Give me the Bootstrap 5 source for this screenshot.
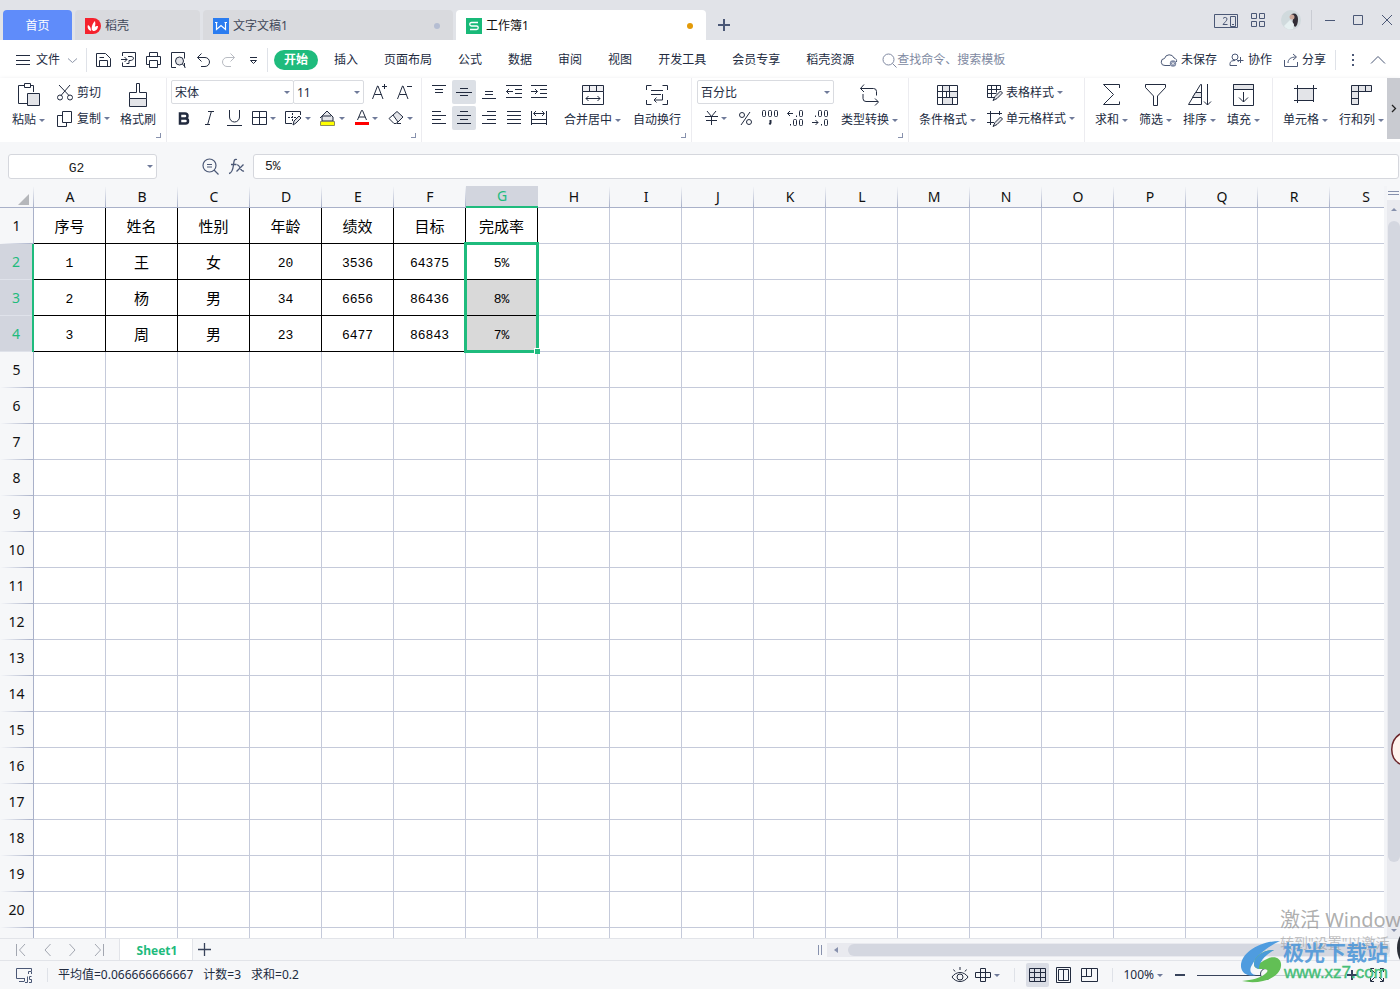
<!DOCTYPE html>
<html lang="zh-CN">
<head>
<meta charset="utf-8">
<meta name="viewport" content="width=device-width, initial-scale=1">
<title>工作簿1</title>
<link rel="stylesheet" href="https://cdn.jsdelivr.net/npm/bootstrap@5.3.0/dist/css/bootstrap.min.css">
<style>
:root{--ink:#222b3f;--green:#1fbb7d;--line:#c5cada;--headline:#a9b1c9;--pane:#f6f7f9;--soft:#dfe2e8}
body{font:12px/18px "Noto Sans","Noto Sans CJK SC",sans-serif;color:var(--ink);background:#fff}
button{border:0;background:none;padding:0;color:inherit;font:inherit;white-space:nowrap}
svg{flex:none;display:block;overflow:visible}
.ic{fill:none;stroke:var(--ink);stroke-width:1}
.ic .f{fill:#e3e4e8}
.titlebar{height:40px;background:#e1e3e8;padding-left:3px}
.docs{gap:3px}
.doc{height:30px;background:#d9dade;border-radius:4px 4px 0 0;color:#3f4759;padding:2px 13px 0 10px;min-width:0}
.doc.home{width:69px;background:#5f8cfa;color:#fff;justify-content:center;padding:2px 0 0}
.doc.now{background:#fff;color:#111}
.w125{width:125px}.w250{width:250px}
.dot{width:6px;height:6px;border-radius:50%;background:#b5bdd2}
.now .dot{background:#e39a08}
.vr1{width:1px;background:var(--soft);flex:none}
.menubar{height:38px;padding-top:2px}
.quick{width:25px;display:flex;justify-content:center}
.mtab{padding:1px 10px;border-radius:10px}
.mtab.on{background:var(--green);color:#fff;font-weight:700}
.dd::after{content:"";flex:none;border:3px solid transparent;border-top-color:#6f7a99;border-bottom:0;margin-left:3px}
.dd{display:inline-flex;align-items:center}
.ribbon{height:64px;box-shadow:0 2px 5px #d5d7dc}
.grp{border-right:1px solid #ececf0;flex:none;height:64px;display:flex;flex-direction:column;padding-top:1px}
.corner{align-self:flex-end;width:5px;height:5px;border:solid #8791ad;border-width:0 1px 1px 0;margin:2px 5px 0 0}
.line26{height:26px;display:flex;align-items:center}
button.line26{padding-top:1px}
.big{height:52px;display:flex;flex-direction:column;align-items:center;padding-top:4px;gap:4px}
.tool{height:24px;display:flex;align-items:center;justify-content:center}
.w24{width:24px;margin-right:1px}.w25{width:25px}.w34{width:34px}
.tool.on{background:#dce0e6;border-radius:2px}
select.pick{appearance:none;height:24px;border:1px solid #d9dbe0;border-radius:2px;background:#fff url("data:image/svg+xml,%3Csvg xmlns='http://www.w3.org/2000/svg' width='6' height='3'%3E%3Cpath d='M0 0h6L3 3z' fill='%236f7a99'/%3E%3C/svg%3E") no-repeat right 3px center;padding:1px 3px 0;color:inherit;font:inherit}
.more{background:#c9cbd1;width:13px;height:61px}
.fbar{height:44px;background:var(--pane);padding:12px 1px 0 8px}
.fbar input{height:25px;border:1px solid #d5d7dd;border-radius:3px;font:13px "Liberation Mono",monospace;color:#222;min-width:0}
.namebox{width:149px;border:1px solid #d5d7dd;border-radius:3px;background:#fff;height:25px;padding-right:3px}
.fbar .namebox input{border:0;height:23px;width:100%;text-align:center;padding:3px 0 0;background:none}
.sheet{table-layout:fixed;border-collapse:separate;border-spacing:0;width:1402px;font-size:14px;color:#111}
.sheet th,.sheet td{padding:0;text-align:center;vertical-align:middle;font-weight:400;height:36px;line-height:20px}
.sheet td{border:solid var(--line);border-width:0 1px 1px 0}
.sheet thead th{height:22px;border-bottom:1px solid var(--headline);background:linear-gradient(var(--pane),var(--headline)) right/1px 100% no-repeat var(--pane)}
.sheet tbody th{border-right:1px solid var(--headline);background:linear-gradient(90deg,var(--pane),var(--headline)) bottom/100% 1px no-repeat var(--pane)}
.sheet thead th:first-child{width:34px}
.sheet thead th.sel{background:#d2d5de;color:var(--green);border-bottom:2px solid var(--green)}
.sheet tbody th.sel{background:linear-gradient(#dfe2ea,#dfe2ea) bottom/100% 1px no-repeat #d2d5de;color:var(--green);border-right:2px solid var(--green)}
.sheet td.data{border-color:#000;color:#000;font:15px/20px "Noto Sans CJK SC",sans-serif;padding-top:1px}
.sheet td.num{font:13px/20px "Liberation Mono",monospace;padding-top:4px}
.sheet td.shade{background:#d9d9d9}
.range{position:absolute;left:-2px;top:-2px;width:75px;height:111px;border:3px solid var(--green);pointer-events:none;z-index:2}
.range::after{content:"";position:absolute;right:-4px;bottom:-4px;width:6px;height:6px;background:var(--green);border:solid #fff;border-width:1px 0 0 1px}
.vscroll{width:16px;background:#e9eaef;border-left:3px solid #f3f4f7}
.vthumb{width:12px;flex:1;border-radius:6px;background:#d4d7e0;margin:7px 0 76px}
.tabsbar{height:23px;background:var(--pane);border:solid #e2e4e9;border-width:1px 0}
.pager{width:119px;gap:18px}
.sheettab{width:74px;background:#fff;color:var(--green);font-weight:700;border:solid #e2e4e9;border-width:0 1px;text-align:center;padding:2px 0 0 2px}
.hscroll{width:563px;background:#e9eaef;height:14px}
.hthumb{height:12px;border-radius:6px;background:#d4d7e0}
.status{height:28px;background:var(--pane)}
.stats{gap:10px}
.view{width:23px;height:24px;display:flex;align-items:center;justify-content:center;border-radius:2px}
.view.on{background:#dadde5}
.zoomer{appearance:none;width:148px;height:14px;background:linear-gradient(90deg,#38435b 50%,#c9ccd4 50%) center/100% 1px no-repeat}
.zoomer::-webkit-slider-runnable-track{background:none;height:14px;display:flex;align-items:center}
.zoomer::-webkit-slider-thumb{appearance:none;width:12px;height:12px;margin:0;border:1px solid #38435b;border-radius:50%;background:var(--pane)}
.overlay{right:0;bottom:0;width:160px;height:84px;overflow:hidden;pointer-events:none;z-index:5}
.act{left:40px;top:0;font-size:20px;line-height:30px;color:#999c;white-space:nowrap}
.act2{left:40px;top:28px;font-size:14px;line-height:20px;color:#9999;white-space:nowrap}
.brand{left:43px;top:32px;font:700 21px/28px "Noto Sans CJK SC",sans-serif;color:#4c96d8e0;white-space:nowrap}
.site{left:44px;top:58px;font:17px/20px "Liberation Sans",sans-serif;color:#45be78;-webkit-text-stroke:0.4px #45be78}
.bubble{right:0;top:732px;z-index:5}
.edge{right:0;top:930px;z-index:6}
</style>
</head>
<body class="vh-100 overflow-hidden d-flex flex-column position-relative">

<header class="titlebar d-flex align-items-end flex-shrink-0">
  <div class="docs d-flex align-items-end">
    <button class="doc home d-flex align-items-center">首页</button>
    <button class="doc w125 d-flex align-items-center gap-1">
      <svg width="16" height="16" viewBox="0 0 16 16"><path d="M0 0h8a8 8 0 0 1 0 16H0z" fill="#f5222d"/><path d="M7 13C6 8 8 5 10 3c1 4 0 7-3 10M6 13C3 12 2 9 3 7c2 1 3 3 3 6M8 13c0-3 2-5 5-5 0 3-2 5-5 5" fill="#fff"/></svg>稻壳</button>
    <button class="doc w250 d-flex align-items-center gap-1">
      <svg width="16" height="16" viewBox="0 0 16 16"><path d="M0 0h16v16H0z" fill="#2a7cf0"/><path d="M3.500 4v7.500L8 7.500l4.500 4V4M2 4.500h2.500M11.500 4.500H14" fill="none" stroke="#fff" stroke-width="1.200"/></svg>文字文稿1<span class="dot ms-auto"></span></button>
    <button class="doc now w250 d-flex align-items-center gap-1">
      <svg width="16" height="16" viewBox="0 0 16 16"><path d="M0 0h16v16H0z" fill="#18b978"/><path d="M12 4.500H5.500a1.500 1.500 0 0 0 0 3.500h5a1.700 1.700 0 0 1 0 3.500H4" fill="none" stroke="#fff" stroke-width="1.300"/></svg>工作簿1<span class="dot ms-auto"></span></button>
  </div>
  <button class="ms-2 px-1 pb-2" aria-label="新建"><svg width="12" height="14" viewBox="0 0 12 14" fill="none" stroke="#4b5876" stroke-width="2"><path d="M6 1v12M0 7h12"/></svg></button>
  <div class="ms-auto d-flex align-items-center h-100" style="padding-right:8px">
    <button aria-label="窗口"><svg width="24" height="15" viewBox="0 0 24 15" fill="none" stroke="#4b5876"><path d="M.5 1.500h23v13H.5zM16.500 3.500h5v10h-5zM18 11.500h2M9 5.500c1-1.500 4-1.500 4 .5 0 1.500-2 3-4 5.500h4.500"/></svg></button>
    <button style="margin-left:13px" aria-label="应用"><svg width="14" height="14" viewBox="0 0 14 14" fill="none" stroke="#4b5876"><path d="M.5.5h5v5h-5zM8.500.5h5v5h-5zM.5 8.500h5v5h-5zM8.500 8.500h5v5h-5z"/></svg></button>
    <button class="ms-3" aria-label="账户"><svg width="20" height="20" viewBox="0 0 20 20"><circle cx="10" cy="10" r="10" fill="#d0dadd"/><path d="M10 5c3-3 7-1 7 4 0 4-1 7-3 8-2-2-3-5-2-8z" fill="#312e36"/><circle cx="11" cy="7" r="2.500" fill="#cba99b"/><path d="M3 16l6-6 4 4-1 5c-4 1-7 0-9-3" fill="#e6f0f1"/></svg></button>
    <span class="vr1" style="height:20px;margin-left:10px;background:#c9ccd3"></span>
    <button style="margin-left:13px" aria-label="最小化"><svg width="10" height="10" stroke="#4b5876"><path d="M0 5.500h10"/></svg></button>
    <button style="margin-left:18px" aria-label="最大化"><svg width="10" height="10" fill="none" stroke="#4b5876"><path d="M.5.5h9v9h-9z"/></svg></button>
    <button style="margin-left:19px" aria-label="关闭"><svg width="10" height="10" stroke="#4b5876"><path d="M0 0l10 10M10 0L0 10"/></svg></button>
  </div>
</header>

<nav class="menubar d-flex align-items-center flex-shrink-0 ps-3">
  <button class="d-flex align-items-center"><svg class="ic" width="14" height="10"><path d="M0 .5h14M0 5.500h14M0 9.500h14"/></svg><span style="margin-left:6px">文件</span>
    <svg class="ms-2" width="9" height="5" fill="none" stroke="#8d95a8"><path d="M0 .5l4.500 4L9 .5"/></svg></button>
  <span class="vr1" style="height:24px;margin-left:9px;margin-right:4px"></span>
  <button class="quick" aria-label="保存"><svg class="ic" width="15" height="16"><path d="M.5 1.500h9l5 5v8H.5zM3.500 14.500v-6h8v6M3.500 5.500H8"/></svg></button>
  <button class="quick" aria-label="输出"><svg class="ic" width="15" height="16"><path d="M1.500 4V.5h13v14h-13v-4M0 7.500h6M3.500 5L6 7.500 3.500 10M8 11.500V8.500h1c4.500 0 4.500-4 1-4H7M8 11.500H5.500"/></svg></button>
  <button class="quick" aria-label="打印"><svg class="ic" width="15" height="16"><path d="M3.500 4V.5h8V4M3 12.500H.5v-8h14v8H12M3.500 8.500h8v7h-8z"/></svg></button>
  <button class="quick" aria-label="预览"><svg class="ic" width="15" height="16"><path d="M5 15.500H.5V.5h13v6M13.500 11v4.500"/><circle class="f" cx="8.500" cy="9" r="4"/><path d="M11.500 12l3 3.500"/></svg></button>
  <button class="quick" aria-label="撤销"><svg class="ic" width="13" height="14"><path d="M4.500.5l-4 4 4 4M.5 4.500H8a4.500 4.500 0 0 1 0 9H4"/></svg></button>
  <button class="quick" aria-label="恢复"><svg class="ic" width="13" height="14" style="stroke:#b8bbc2"><path d="M8.500.5l4 4-4 4M12.500 4.500H5a4.500 4.500 0 0 0 0 9h4"/></svg></button>
  <button class="quick" aria-label="更多"><svg class="ic" width="7" height="8"><path d="M0 1.500h7M.5 4.500l3 3 3-3z"/></svg></button>
  <span class="vr1" style="height:24px;margin:0 6px 0 1px"></span>
  <div class="d-flex" style="gap:6px">
    <button class="mtab on">开始</button><button class="mtab">插入</button><button class="mtab">页面布局</button><button class="mtab">公式</button><button class="mtab">数据</button><button class="mtab">审阅</button><button class="mtab">视图</button><button class="mtab">开发工具</button><button class="mtab">会员专享</button><button class="mtab">稻壳资源</button>
  </div>
  <button class="d-flex align-items-center" style="margin-left:18px;color:#8089a1"><svg width="15" height="15" fill="none" stroke="#8089a1"><circle cx="6.500" cy="6.500" r="5.500"/><path d="M10.500 10.500l4 4"/></svg><span>查找命令、搜索模板</span></button>
  <div class="ms-auto d-flex align-items-center" style="gap:12px;padding-right:15px">
    <button class="d-flex align-items-center gap-1"><svg class="ic" width="16" height="14" style="stroke:#4b5876"><path d="M9 12.500H4a3.500 3.500 0 0 1-.5-7 5 5 0 0 1 9.500-.5c2 .5 3 2 2.500 4"/><circle cx="12" cy="10.500" r="3.200" fill="#7f8aa5" stroke="none"/><path d="M10.800 9.300l2.400 2.400M13.200 9.300l-2.400 2.400" stroke="#fff"/></svg>未保存</button>
    <button class="d-flex align-items-center gap-1"><svg class="ic" width="15" height="14" style="stroke:#4b5876"><circle cx="6" cy="4" r="3"/><path d="M8 12.500H1v-2c0-2 2-3 5-3M8 7.500l2 1M11.500 4v6M8.500 7.500h6"/></svg>协作</button>
    <button class="d-flex align-items-center gap-1"><svg class="ic" width="14" height="14" style="stroke:#4b5876"><path d="M.5 7v6.500h13V9M4 10c0-4 3-6 8-6M9 1l3.500 3L9 7"/></svg>分享</button>
    <span class="vr1" style="height:20px;margin-left:-3px"></span>
    <button class="px-1" style="margin-right:1px" aria-label="选项"><svg width="2" height="12" fill="#4b5876"><path d="M0 0h2v2H0zM0 5h2v2H0zM0 10h2v2H0z"/></svg></button>
    <button aria-label="收起"><svg width="14" height="8" fill="none" stroke="#4b5876"><path d="M0 7.500l7-7 7 7"/></svg></button>
  </div>
</nav>

<section class="ribbon d-flex flex-shrink-0">
  <div class="grp" style="width:167px">
    <div class="d-flex" style="padding-left:12px">
      <button class="big"><svg class="ic" width="22" height="24"><path d="M7 2.500H.5v18H9M15.500 9V2.500H13M6.500.5h6v4h-6z"/><path class="f" d="M9.500 10.500h12v12h-12z"/></svg><span class="dd">粘贴</span></button>
      <div style="margin-left:12px;width:54px">
        <button class="line26" style="gap:4px"><svg class="ic" width="16" height="16"><circle cx="3" cy="12.500" r="2.500"/><circle cx="13" cy="12.500" r="2.500"/><path d="M4 10.500L13 0M12 10.500L2 0"/></svg>剪切</button>
        <button class="line26" style="gap:4px"><svg class="ic" width="16" height="16"><path d="M5.500.5h9v11h-9zM5.500 4.500H.5v11h9v-4"/></svg><span class="dd">复制</span></button>
      </div>
      <button class="big" style="margin-left:9px"><svg class="ic" width="18" height="24"><path d="M7.500 9.500v-9h3v9h7v6H.5v-6z"/><path class="f" d="M.5 15.500h17v8H.5z"/></svg>格式刷</button>
    </div><span class="corner"></span>
  </div>

  <div class="grp" style="width:255px">
    <div class="line26" style="padding-left:4px">
      <select class="pick" style="width:123px" aria-label="字体"><option>宋体</option></select>
      <select class="pick" style="width:71px;margin-left:-1px" aria-label="字号"><option>11</option></select>
      <button class="tool w25" style="margin-left:3px" aria-label="增大字号"><svg class="ic" width="15" height="16"><path d="M.5 15L5.500 2H6l5 13M2.500 10.500h7M12.500 0v5M10 2.500h5"/></svg></button>
      <button class="tool w25" aria-label="减小字号"><svg class="ic" width="15" height="16"><path d="M.5 15L5.500 2H6l5 13M2.500 10.500h7M10 2.500h5"/></svg></button>
    </div>
    <div class="line26" style="padding-left:5px">
      <button class="tool w25" aria-label="加粗"><svg class="ic" width="13" height="13" style="stroke-width:2.500"><path d="M2 1.500h5a2.300 2.300 0 0 1 0 5H2zM2 6.500h5.500a2.500 2.500 0 0 1 0 5H2z"/></svg></button>
      <button class="tool w25" aria-label="倾斜"><svg class="ic" width="9" height="14"><path d="M3 .5h6M0 13.500h5M6.500 0l-4 14"/></svg></button>
      <button class="tool w25" aria-label="下划线"><svg class="ic" width="15" height="16"><path d="M2.500 0v7a5 5 0 0 0 10 0V0M0 15.500h15"/></svg></button>
      <button class="tool w34 dd" aria-label="边框"><svg class="ic" width="15" height="16"><path d="M.5 1.500h14v13H.5zM7.500 1v14M0 7.500h15"/></svg></button>
      <button class="tool w34 dd" aria-label="绘制边框"><svg class="ic" width="17" height="16"><path d="M15.500 5V1.500H.5v12H7"/><path d="M7.500 3v9M3 7.500h9" stroke-dasharray="2 1"/><path class="f" d="M8 15l1-4 5-5 2 2-5 5z"/></svg></button>
      <button class="tool w34 dd" aria-label="填充颜色"><svg class="ic" width="17" height="16"><path class="f" d="M3 6l5-5 6 6v4H3z"/><path d="M1 8l2-2h9"/><path d="M1.500 11.500h14v4h-14z" style="fill:#ff0;stroke:#8d8e55"/></svg></button>
      <button class="tool w34 dd" aria-label="字体颜色"><svg class="ic" width="14" height="16"><path d="M2.500 10L6.500.5h1L11.500 10M4 7h6"/><path d="M0 12h14v3H0z" style="fill:red;stroke:none"/></svg></button>
      <button class="tool w34 dd" aria-label="清除"><svg class="ic" width="16" height="14"><path class="f" d="M5 4l4-3.500 6 5.500-5 5z"/><path d="M5 4L1 7.500l5 5h2l2-1.500M9 12.500h4"/></svg></button>
    </div><span class="corner"></span>
  </div>

  <div class="grp" style="width:270px">
    <div class="d-flex" style="padding-left:5px">
      <div>
        <div class="line26">
          <button class="tool w24" aria-label="顶端对齐"><svg class="ic" width="14" height="14"><path d="M0 .5h14M3 4.500h8M3 7.500h8"/></svg></button>
          <button class="tool w24 on" aria-label="垂直居中"><svg class="ic" width="16" height="14"><path d="M4 3.500h8M0 7.500h16M4 10.500h8"/></svg></button>
          <button class="tool w24" aria-label="底端对齐"><svg class="ic" width="14" height="14"><path d="M3 6.500h8M3 9.500h8M0 13.500h14"/></svg></button>
          <button class="tool w24" aria-label="减少缩进"><svg class="ic" width="16" height="14"><path d="M0 .5h16M9 4.500h7M9 8.500h7M0 12.500h16M7 6.500H.5M3 4L.5 6.500 3 9"/></svg></button>
          <button class="tool w24" aria-label="增加缩进"><svg class="ic" width="16" height="14"><path d="M0 .5h16M9 4.500h7M9 8.500h7M0 12.500h16M0 6.500h6.500M4 4l2.500 2.500L4 9"/></svg></button>
        </div>
        <div class="line26">
          <button class="tool w24" aria-label="左对齐"><svg class="ic" width="14" height="14"><path d="M0 .5h9M0 4.500h14M0 8.500h9M0 12.500h14"/></svg></button>
          <button class="tool w24 on" aria-label="水平居中"><svg class="ic" width="14" height="14"><path d="M3 .5h8M0 4.500h14M3 8.500h8M0 12.500h14"/></svg></button>
          <button class="tool w24" aria-label="右对齐"><svg class="ic" width="14" height="14"><path d="M5 .5h9M0 4.500h14M5 8.500h9M0 12.500h14"/></svg></button>
          <button class="tool w24" aria-label="两端对齐"><svg class="ic" width="14" height="14"><path d="M0 .5h14M0 4.500h14M0 8.500h14M0 12.500h14"/></svg></button>
          <button class="tool w24" aria-label="分散对齐"><svg class="ic" width="16" height="14"><path d="M.5 0v14M15.500 0v14M3 2.500h10M5 0L2.500 2.500 5 5M11 0l2.500 2.500L11 5M1 8.500h14M1 12.500h14"/></svg></button>
        </div>
      </div>
      <button class="big" style="margin-left:12px"><svg class="ic" width="22" height="20" style="margin:2px 0"><path class="f" d="M.5.500h21v6H.5z" style="fill:#f0f0f3"/><path d="M.5 6.500v13h21v-13M7.500.5v6M14.500.5v6M4 13.500h14M6.500 11L4 13.500 6.500 16M15.500 11l2.500 2.500-2.500 2.500"/></svg><span class="dd">合并居中</span></button>
      <button class="big" style="margin-left:12px"><svg class="ic" width="22" height="20" style="margin:2px 0"><path d="M.5 5V.5h5M16.500.5h5V5M.5 15v4.500h5M16.500 19.500h5V15M5 5.500h12M5 9.500h10M16.500 9v6H8M10.500 12.500L8 15l2.500 2.500"/></svg>自动换行</button>
    </div><span class="corner"></span>
  </div>

  <div class="grp" style="width:217px">
    <div class="d-flex" style="padding-left:5px">
      <div>
        <div class="line26"><select class="pick" style="width:137px" aria-label="数字格式"><option>百分比</option></select></div>
        <div class="line26" style="padding-left:2px">
          <button class="tool w34 dd" aria-label="货币"><svg class="ic" width="13" height="14"><path d="M2 0l4.500 5.500L11 0M0 5.500h13M1 9.500h11M6.500 5.500V14"/></svg></button>
          <button class="tool w25" aria-label="百分比"><svg class="ic" width="13" height="13"><circle cx="3" cy="3" r="2.500"/><circle cx="10" cy="10" r="2.500"/><path d="M11 0L2 13"/></svg></button>
          <button class="tool w25" aria-label="千位分隔"><svg class="ic" width="17" height="16"><rect x=".5" y=".5" width="3" height="6" rx="1"/><rect x="6.500" y=".5" width="3" height="6" rx="1"/><rect x="12.500" y=".5" width="3" height="6" rx="1"/><path d="M8.500 10v3l-1 1.500" stroke-width="2"/></svg></button>
          <button class="tool w25" aria-label="增加小数位"><svg class="ic" width="17" height="16"><path d="M6 3.500H.5M3 1L.5 3.500 3 6M9.500 5.500V7M3.500 14v1.500"/><rect x="12.500" y=".5" width="3" height="6" rx="1"/><rect x="6.500" y="9.500" width="3" height="6" rx="1"/><rect x="12.500" y="9.500" width="3" height="6" rx="1"/></svg></button>
          <button class="tool w25" aria-label="减少小数位"><svg class="ic" width="17" height="16"><path d="M0 12.500h6M3.500 10L6 12.500 3.500 15M9.500 14v1.500M3.500 5.500V7"/><rect x="6.500" y=".5" width="3" height="6" rx="1"/><rect x="12.500" y=".5" width="3" height="6" rx="1"/><rect x="12.500" y="9.500" width="3" height="6" rx="1"/></svg></button>
        </div>
      </div>
      <button class="big" style="margin-left:7px"><svg class="ic" width="19" height="22" style="margin:1px 0"><path d="M4 .5l-3.500 4L4 8M.5 4.500h13a3 3 0 0 1 3 3v4M15 14.500l3.500 3.500-3.500 3.500M18 17.500H6a3 3 0 0 1-3-3V10"/></svg><span class="dd">类型转换</span></button>
    </div><span class="corner"></span>
  </div>

  <div class="grp" style="width:176px">
    <div class="d-flex" style="padding-left:10px">
      <button class="big"><svg class="ic" width="21" height="20" style="margin:2px 0"><path d="M.5.5h20v19H.5z"/><path class="f" d="M5.500.5h7v6h-7zM12.500 6.500h8v6h-8zM5.500 12.500h10v7h-10z"/><path d="M.5 6.500h20M.5 12.500h20M5.500.5v19M12.500 0v6M9.500 6.500v6M15.500 12.500v7"/></svg><span class="dd">条件格式</span></button>
      <div style="margin-left:11px">
        <button class="line26" style="gap:3px"><svg class="ic" width="16" height="16"><path d="M7 12.500H.5V.5h13V5M.5 4.500h13M.5 8.500h9M4.500.5v12M9.500.5v7"/><path class="f" d="M6 15.500l2-4 5.500-5.500 2 2L10 13.500z"/></svg><span class="dd">表格样式</span></button>
        <button class="line26" style="gap:3px"><svg class="ic" width="16" height="16"><path d="M3.500 0v14M0 2.500h15M0 11.500h7M12.500 0v4"/><path class="f" d="M6 15.500l2-4 5.500-5.500 2 2L10 13.500z"/></svg><span class="dd">单元格样式</span></button>
      </div>
    </div>
  </div>

  <div class="grp" style="width:188px">
    <div class="d-flex" style="padding-left:10px;gap:11px">
      <button class="big"><svg class="ic" width="17" height="22" style="margin:1px 0"><path d="M16.500 4V.5H.5l10 10-10 10h16v-3"/></svg><span class="dd">求和</span></button>
      <button class="big"><svg class="ic" width="21" height="22" style="margin:1px 0"><path d="M.5.5h20v3L12.500 12v9.500h-4V12l-8-8.500z"/></svg><span class="dd">筛选</span></button>
      <button class="big"><svg class="ic" width="23" height="22" style="margin:1px 0"><path d="M.5 20.500L12.500.5h1v20z"/><path class="f" d="M4.500 13.500h9v-5h-6z"/><path d="M19.500 0v21M16 17.500l3.500 3.500 3.500-3.500"/></svg><span class="dd">排序</span></button>
      <button class="big"><svg class="ic" width="21" height="22" style="margin:1px 0"><path d="M.5.500h20v21H.5z"/><path class="f" d="M.5.5h20v5H.5z"/><path d="M10.500 8v10M6 13.500l4.500 4.500 4.500-4.500"/></svg><span class="dd">填充</span></button>
    </div>
  </div>

  <div class="grp border-0" style="width:114px">
    <div class="d-flex" style="padding-left:10px;gap:11px">
      <button class="big"><svg class="ic" width="23" height="20" style="margin:2px 0"><path class="f" d="M3.500 3.500h16v12h-16z"/><path d="M3.500 0v18M19.500 0v13M0 3.500h23M0 15.500h17M19.500 15v2"/></svg><span class="dd">单元格</span></button>
      <button class="big"><svg class="ic" width="21" height="20" style="margin:2px 0"><path class="f" d="M.5.5h20v6h-13v13h-7z"/><path d="M7.500.5v6M14.500.5v6M.5 6.500h7M.5 13.500h7"/></svg><span class="dd">行和列</span></button>
    </div>
  </div>
  <button class="more ms-auto d-flex align-items-center justify-content-center" aria-label="向右滚动"><svg width="4" height="7" fill="none" stroke="#222" stroke-width="1.300"><path d="M0 0l3.500 3.500L0 7"/></svg></button>
</section>

<section class="fbar d-flex flex-shrink-0">
  <div class="namebox dd"><input value="G2" aria-label="名称框"></div>
  <button class="tool" style="margin-left:45px" aria-label="查找"><svg width="17" height="17" fill="none" stroke="#4b5876" stroke-width="1.200"><circle cx="7.500" cy="7.500" r="6.500"/><path d="M12 12l4.500 4.500M5 6.500h5M5 9h5"/></svg></button>
  <button class="tool" style="margin:0 8px 0 10px" aria-label="插入函数"><svg width="16" height="17" fill="none" stroke="#4b5876" stroke-width="1.300"><path d="M8 1.500C5 .5 5 3 4.500 7S3 15 0 15.500M2 6.500h5.500M8 7c3-1 3 7 7 6M14.500 6.500L7.500 13.500"/></svg></button>
  <input class="flex-grow-1" value="5%" aria-label="编辑栏" style="padding:0 11px">
</section>

<main class="d-flex flex-grow-1 overflow-hidden" style="min-height:0">
  <div class="flex-grow-1 overflow-hidden" style="min-width:0">
    <table class="sheet" id="sheet"><thead></thead><tbody></tbody></table>
  </div>
  <div class="vscroll d-flex flex-column flex-shrink-0 align-items-center">
    <svg width="13" height="28"><path d="M0 0h13v14H0z" fill="#f6f7f9"/><path d="M1 5.500h11M1 8.500h11" stroke="#8791ad"/><path d="M4 25l3-3 3 3z" fill="#8791ad"/></svg>
    <div class="vthumb"></div>
    <svg width="6" height="13" style="margin-top:-13px"><path d="M0 4h6L3 7z" fill="#8791ad"/></svg>
  </div>
</main>

<section class="tabsbar d-flex flex-shrink-0">
  <div class="pager d-flex align-items-center ps-3">
    <button aria-label="第一张"><svg width="10" height="12" fill="none" stroke="#a3a7b1"><path d="M.5 0v12M9 0L3.500 6 9 12"/></svg></button>
    <button aria-label="上一张"><svg width="7" height="12" fill="none" stroke="#a3a7b1"><path d="M6.500 0L1 6l5.500 6"/></svg></button>
    <button aria-label="下一张"><svg width="7" height="12" fill="none" stroke="#a3a7b1"><path d="M.5 0L6 6 .5 12"/></svg></button>
    <button aria-label="最后一张"><svg width="10" height="12" fill="none" stroke="#a3a7b1"><path d="M9.500 0v12M1 0l5.500 6L1 12"/></svg></button>
  </div>
  <button class="sheettab">Sheet1</button>
  <button style="margin-left:5px" aria-label="新建工作表"><svg width="13" height="13" stroke="#38435b" stroke-width="1.300"><path d="M6.500 0v13M0 6.500h13"/></svg></button>
  <div class="ms-auto d-flex align-items-center">
    <svg width="4" height="10" stroke="#8791ad"><path d="M.5 0v10M3.500 0v10"/></svg>
    <div class="hscroll d-flex align-items-center" style="margin:0 10px 0 5px">
      <svg width="21" height="8"><path d="M11 1v6L7 4z" fill="#8791ad"/></svg><div class="hthumb flex-grow-1"></div>
    </div>
  </div>
</section>

<footer class="status d-flex align-items-center flex-shrink-0 ps-3">
  <svg class="ic" width="16" height="15" style="stroke:#4b5876"><path d="M9 10.500H.5V.5h15V3M3 13.500h5M8.500 10v3.500M11.500 8.500v6H9M15.500 8.500h-2v3h2v3h-2.500M12.500 6V3.500h3V6"/></svg>
  <span class="vr1" style="height:14px;margin:0 10px 0 15px"></span>
  <div class="stats d-flex"><span>平均值=0.066666666667</span><span>计数=3</span><span>求和=0.2</span></div>
  <div class="ms-auto d-flex align-items-center" style="padding-right:16px">
    <button aria-label="护眼"><svg class="ic" width="16" height="16"><path d="M0 10c4-6 12-6 16 0-4 6-12 6-16 0M8 0v3M1.500 2.500l1.500 2M14.500 2.500l-1.500 2"/><circle cx="8" cy="10" r="3"/></svg></button>
    <button class="dd" style="margin-left:7px" aria-label="阅读模式"><svg class="ic" width="16" height="14"><path d="M5.500.5h5v13h-5zM.5 4.500h15v5H.5z"/></svg></button>
    <span class="vr1" style="height:14px;margin:0 11px 0 14px"></span>
    <button class="view on" aria-label="普通视图"><svg class="ic" width="17" height="14"><path d="M.5.5h16v13H.5zM.5 4.500h16M.5 9.500h16M5.500.5v13M11.500.5v13"/></svg></button>
    <button class="view" style="margin-left:3px" aria-label="分页预览"><svg class="ic" width="15" height="16"><path d="M.5.5h14v15H.5zM2.500 2.500h10v11h-10zM7.500 3v10"/></svg></button>
    <button class="view" style="margin-left:3px" aria-label="页面布局"><svg class="ic" width="17" height="14"><path d="M.5.5h16v13H.5zM.5 8.500h10v-8M5.500.5v8"/></svg></button>
    <span class="vr1" style="height:14px;margin:0 10px 0 11px"></span>
    <button class="dd">100%</button>
    <button style="margin-left:12px" aria-label="缩小"><svg width="10" height="10" stroke="#38435b" stroke-width="2"><path d="M0 5h10"/></svg></button>
    <input class="zoomer" type="range" value="46" aria-label="缩放" style="margin:0 2px 0 12px">
    <button aria-label="放大"><svg width="10" height="10" stroke="#38435b" stroke-width="2"><path d="M0 5h10M5 0v10"/></svg></button>
    <button style="margin-left:13px" aria-label="全屏"><svg class="ic" width="14" height="14"><path d="M.5 4V.5H4M10 .5h3.500V4M.5 10v3.500H4M10 13.500h3.500V10M1 1l4 4M13 1L9 5M1 13l4-4M13 13L9 9"/></svg></button>
  </div>
</footer>

<div class="overlay position-absolute">
  <div class="act position-absolute">激活 Windows</div>
  <div class="act2 position-absolute">转到"设置"以激活</div>
  <svg class="position-absolute start-0 bottom-0" width="44" height="50" viewBox="0 0 44 50">
    <path d="M40 2C20 2 0 14 1 28c1 7 8 10 15 8-6-1-7-5-4-10C17 16 27 8 40 2" fill="#4f9cdf"/>
    <path d="M34 11C23 11 14 18 14 25c0 5 5 5 9 5 5 0 6 2 2 5-5 4-13 6-23 7 18 4 38-3 39-15 1-8-7-11-14-7-3 1-5 3-7 4 2-6 7-10 14-13" fill="#62bf55"/>
    <path d="M34 11C23 11 14 18 14 25c0 3 2 4 5 5 0-7 6-14 15-19" fill="#4a9bd9"/>
  </svg>
  <div class="brand position-absolute">极光下载站</div>
  <div class="site position-absolute">www.xz7.com</div>
</div>
<svg class="bubble position-absolute" width="9" height="34"><path d="M9 2C-2 9-2 26 9 32" fill="#fff3ee" stroke="#6b2429" stroke-width="1.500"/></svg>
<svg class="edge position-absolute" width="3" height="36"><path d="M3 6C-1 13-1 23 3 30z" fill="#2c3038"/></svg>

<script src="https://cdn.jsdelivr.net/npm/bootstrap@5.3.0/dist/js/bootstrap.bundle.min.js"></script>
<script>
const data = [
  ["序号","姓名","性别","年龄","绩效","目标","完成率"],
  ["1","王","女","20","3536","64375","5%"],
  ["2","杨","男","34","6656","86436","8%"],
  ["3","周","男","23","6477","86843","7%"]
];
const cols = "ABCDEFGHIJKLMNOPQRS".split("");
const sheet = document.getElementById("sheet");
sheet.tHead.innerHTML = '<tr><th><svg width="12" height="12" style="margin:6px 0 0 18px"><path d="M11 0v11H0z" fill="#b5b7bb"/></svg></th>' +
  cols.map(c => `<th scope="col"${c === "G" ? ' class="sel"' : ""}>${c}</th>`).join("") + "</tr>";
let rows = "";
for (let r = 0; r < 21; r++) {
  rows += `<tr><th scope="row"${r > 0 && r < 4 ? ' class="sel"' : ""}>${r < 20 ? r + 1 : ""}</th>`;
  cols.forEach((c, i) => {
    const v = data[r] && data[r][i];
    if (!v) { rows += "<td></td>"; return; }
    const cls = ["data"];
    if (/^\d/.test(v)) cls.push("num");
    if (i === 6 && r > 1) cls.push("shade");
    const active = i === 6 && r === 1;
    if (active) cls.push("position-relative");
    rows += `<td class="${cls.join(" ")}">${v}${active ? '<span class="range"></span>' : ""}</td>`;
  });
  rows += "</tr>";
}
sheet.tBodies[0].innerHTML = rows;
</script>
</body>
</html>
